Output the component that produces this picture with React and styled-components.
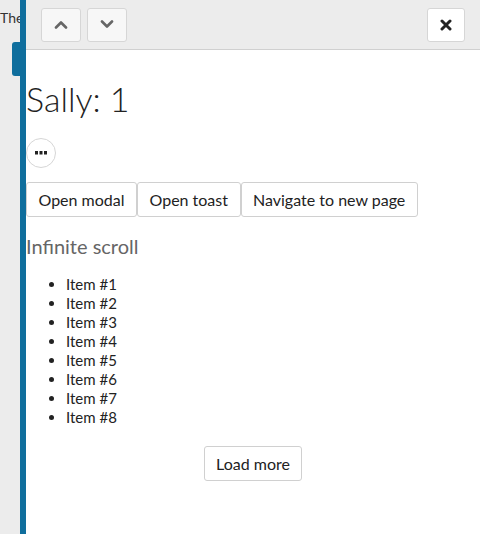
import * as React from "react";
import styled, { createGlobalStyle } from "styled-components";

const GlobalStyle = createGlobalStyle`
  html, body {
    margin: 0;
    padding: 0;
    background: #ececec;
    font-family: Lato, "Open Sans", sans-serif;
    color: #222;
  }
`;

const Page = styled.div`
  display: flex;
  height: 534px;
  overflow: hidden;
`;

const Behind = styled.div`
  width: 20px;
  flex: none;
  overflow: hidden;
  display: flex;
  flex-direction: column;
  align-items: flex-end;
`;

const BehindText = styled.div`
  align-self: flex-start;
  white-space: nowrap;
  font-size: 14px;
  color: #333;
  padding-top: 9px;
  line-height: 17px;
`;

const BehindTab = styled.div`
  margin-top: 16px;
  width: 8px;
  height: 34px;
  background: #0f6e9d;
  border-radius: 3px 0 0 3px;
`;

const Panel = styled.div`
  flex: 1;
  background: #fff;
  border-left: 6px solid #0f6e9d;
  display: flex;
  flex-direction: column;
`;

const Header = styled.div`
  height: 49px;
  background: #ececec;
  border-bottom: 1px solid #d0d0d0;
  display: flex;
  align-items: center;
  padding: 0 15px;
  gap: 6px;
`;

const HeaderButton = styled.button`
  width: ${p => p.$w || 40}px;
  height: 34px;
  background: ${p => (p.$white ? "#fff" : "#f7f7f7")};
  border: 1px solid #d6d6d6;
  border-radius: 3px;
  display: flex;
  align-items: center;
  justify-content: center;
  padding: 0;
  margin-left: ${p => (p.$push ? "auto" : "0")};
`;

const Content = styled.div`
  display: flex;
  flex-direction: column;
  align-items: flex-start;
`;

const Title = styled.h1`
  font-size: 34px;
  font-weight: 300;
  margin: 27px 0 0;
  line-height: 44px;
  color: #222;
`;

const DotsButton = styled.button`
  margin-top: 17px;
  width: 30px;
  height: 30px;
  border-radius: 50%;
  border: 1px solid #d6d6d6;
  background: #fff;
  padding: 0;
  display: flex;
  align-items: center;
  justify-content: center;
`;

const ButtonRow = styled.div`
  display: flex;
  margin-top: 14px;
`;

const Button = styled.button`
  font-family: Lato, "Open Sans", sans-serif;
  font-size: 16px;
  color: #222;
  background: #fff;
  border: 1px solid #d0d0d0;
  border-radius: 3px;
  height: 35px;
  padding: 0 11.5px;
  margin: 0;
`;

const Subtitle = styled.h2`
  font-size: 20px;
  font-weight: 400;
  color: #666;
  margin: 17px 0 0;
  line-height: 24px;
`;

const List = styled.ul`
  margin: 17px 0 0;
  padding-left: 40px;
  font-size: 15px;
  line-height: 19px;
  color: #222;
`;

const LoadRow = styled.div`
  align-self: stretch;
  display: flex;
  justify-content: center;
  margin-top: 19px;
`;

const Chevron = ({ up }) => (
  <svg width="14" height="9" viewBox="0 0 14 9">
    <path
      d={up ? "M2 7.5 L7 2.5 L12 7.5" : "M2 1.5 L7 6.5 L12 1.5"}
      fill="none"
      stroke="#666"
      strokeWidth="2.6"
      strokeLinecap="round"
      strokeLinejoin="round"
    />
  </svg>
);

const Close = () => (
  <svg width="12" height="12" viewBox="0 0 12 12">
    <path d="M2 2 L10 10 M10 2 L2 10" stroke="#222" strokeWidth="3" strokeLinecap="round" />
  </svg>
);

const Dots = () => (
  <svg width="12" height="4" viewBox="0 0 12 4">
    <rect x="0" y="0" width="3" height="3.5" fill="#222" />
    <rect x="4.5" y="0" width="3" height="3.5" fill="#222" />
    <rect x="9" y="0" width="3" height="3.5" fill="#222" />
  </svg>
);

const items = [1, 2, 3, 4, 5, 6, 7, 8];

export default function App() {
  return (
    <>
      <GlobalStyle />
      <Page>
        <Behind>
          <BehindText>The page behind</BehindText>
          <BehindTab />
        </Behind>
        <Panel>
          <Header>
            <HeaderButton><Chevron up /></HeaderButton>
            <HeaderButton><Chevron /></HeaderButton>
            <HeaderButton $push $white $w={38}><Close /></HeaderButton>
          </Header>
          <Content>
            <Title>Sally: 1</Title>
            <DotsButton><Dots /></DotsButton>
            <ButtonRow>
              <Button>Open modal</Button>
              <Button>Open toast</Button>
              <Button>Navigate to new page</Button>
            </ButtonRow>
            <Subtitle>Infinite scroll</Subtitle>
            <List>
              {items.map(i => <li key={i}>Item #{i}</li>)}
            </List>
            <LoadRow>
              <Button>Load more</Button>
            </LoadRow>
          </Content>
        </Panel>
      </Page>
    </>
  );
}
